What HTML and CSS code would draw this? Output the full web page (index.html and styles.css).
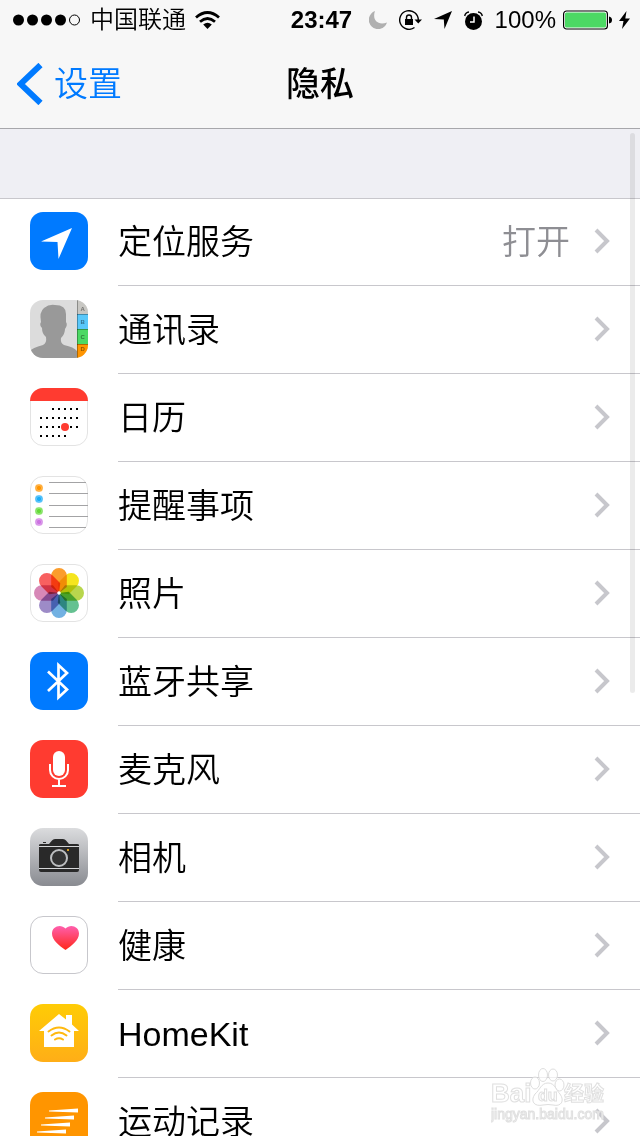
FILE: index.html
```html
<!DOCTYPE html>
<html lang="zh-CN">
<head>
<meta charset="utf-8">
<meta name="viewport" content="width=device-width, initial-scale=1">
<title>隐私</title>
<link rel="stylesheet" href="styles.css">
</head>
<body>
<div class="screen">
  <header class="header">
    <div class="status">
      <div class="status-left">
        <svg width="68" height="12" viewBox="0 0 68 12"><g><circle cx="5.500" cy="6" r="5.500"/><circle cx="19.500" cy="6" r="5.500"/><circle cx="33.500" cy="6" r="5.500"/><circle cx="47.500" cy="6" r="5.500"/><circle cx="61.500" cy="6" r="5" fill="none" stroke="#000"/></g></svg>
        <span class="carrier">中国联通</span>
        <svg width="25" height="18" viewBox="0 0 25 18"><path d="M1 6.500Q12.500-3.500 24 6.500M5 10.800Q12.500 4.300 20 10.800" fill="none" stroke="#000" stroke-width="2.800"/><path d="M8.200 13.600Q12.500 10 16.800 13.600L12.500 18Z"/></svg>
      </div>
      <time class="clock">23:47</time>
      <div class="status-right">
        <svg width="18" height="18" viewBox="0 0 18 18"><path d="M6 0C3 8 8 15 18 11.500A9.300 9.300 0 1 1 6 0Z" fill="#b0b0b0"/></svg>
        <svg width="23" height="20" viewBox="0 0 23 20"><path d="M15.500 17.500A9.300 9.300 0 1 1 19.300 10" fill="none" stroke="#000" stroke-width="1.400"/><path d="M15.500 9.500H23L19.300 13.500ZM6 9H14V15H6Z"/><path d="M7.500 9V7.500A2.500 2.500 0 0 1 12.500 7.500V9" fill="none" stroke="#000" stroke-width="1.400"/></svg>
        <svg width="18" height="18" viewBox="0 0 18 18"><path d="M18 0 10.500 18 9.800 8.500 0 8Z"/></svg>
        <svg width="19" height="19" viewBox="0 0 19 19"><circle cx="9.500" cy="10.500" r="8.500"/><path d="M.7 5A5 5 0 0 1 5 1M18.300 5A5 5 0 0 0 14 1" fill="none" stroke="#000" stroke-width="1.400"/><path d="M10 5.500V11H6" fill="none" stroke="#fff" stroke-width="1.500"/></svg>
        <div class="power">
          <span>100%</span>
          <svg width="49" height="20" viewBox="0 0 49 20"><rect x=".6" y="1" width="43.800" height="18" rx="3" fill="#fff" stroke="#000" stroke-width="1.200"/><rect x="2" y="2.500" width="41" height="15" rx="1.500" fill="#4cd964"/><path d="M46 6.500Q49 7 49 10T46 13.500Z"/></svg>
          <svg width="11" height="18" viewBox="0 0 11 18"><path d="M7.500 0 0 10H4.500L3 18 11 7.500H6.300Z"/></svg>
        </div>
      </div>
    </div>
    <nav class="nav">
      <a class="back" href="#"><svg width="26" height="42" viewBox="0 0 26 42"><path d="M23.500 2 3.500 21 23.500 40" fill="none" stroke="#007aff" stroke-width="6"/></svg><span>设置</span></a>
      <h1 class="title">隐私</h1>
    </nav>
  </header>

  <main class="list">
    <a class="row" href="#">
      <svg class="icon" viewBox="0 0 58 58"><rect width="58" height="58" rx="13" fill="#007aff"/><path d="M42 16 28.500 47 27.500 30 11 29.500Z" fill="#fff"/></svg>
      <span class="cell"><span class="label">定位服务</span><span class="value">打开</span><svg class="chevron" viewBox="0 0 16 26"><path d="M2 2 13 13 2 24"/></svg></span>
    </a>
    <a class="row" href="#">
      <svg class="icon" viewBox="0 0 58 58"><defs><clipPath id="round"><rect width="58" height="58" rx="13"/></clipPath></defs><g clip-path="url(#round)"><path fill="#dcdcdc" d="M0 0H58V58H0Z"/><path fill="#999" d="M0 58V51Q2 48 13 45Q17 43 16 37Q12 34 12 28Q9 25 11 22Q9 12 14 8Q19 4 25 5Q36 5 36 14V22Q38 25 35 29Q35 34 31 38Q30 43 34 45Q44 47 47 51V58Z"/><path fill="#c8c7c3" d="M47 0H58V14H47Z"/><path fill="#5ac8fa" d="M47 14H58V29H47Z"/><path fill="#4cd964" d="M47 29H58V44H47Z"/><path fill="#ff9500" d="M47 44H58V58H47Z"/><path d="M47.500 0V58M47 14.500H58M47 29.500H58M47 44.500H58" stroke="#000" stroke-opacity=".3" fill="none"/><g class="tabs"><text x="50.500" y="11">A</text><text x="50.500" y="24">B</text><text x="50.500" y="39">C</text><text x="50.500" y="51">D</text></g></g></svg>
      <span class="cell"><span class="label">通讯录</span><svg class="chevron" viewBox="0 0 16 26"><path d="M2 2 13 13 2 24"/></svg></span>
    </a>
    <a class="row" href="#">
      <svg class="icon" viewBox="0 0 58 58"><rect x=".5" y=".5" width="57" height="57" rx="12.500" fill="#fff" stroke="#e3e3e3"/><path clip-path="url(#round)" fill="#ff3b30" d="M0 0H58V13H0Z"/><path fill="none" stroke="#000" stroke-width="2" stroke-dasharray="2 4" d="M22 21H48M10 30H48M10 39H48M10 48H36"/><circle cx="35" cy="39" r="4" fill="#ff3b30"/></svg>
      <span class="cell"><span class="label">日历</span><svg class="chevron" viewBox="0 0 16 26"><path d="M2 2 13 13 2 24"/></svg></span>
    </a>
    <a class="row" href="#">
      <svg class="icon" viewBox="0 0 58 58"><rect x=".5" y=".5" width="57" height="57" rx="12.500" fill="#fff" stroke="#e3e3e3"/><path d="M19 6.500H56M19 17.500H58M19 29.500H58M19 40.500H58M19 51.500H56" stroke="#a3a3a5" fill="none"/><g stroke-opacity=".55" stroke-width="1.500"><circle cx="9" cy="12" r="3.300" fill="#ff9500" stroke="#ff9500"/><circle cx="9" cy="23" r="3.300" fill="#1badf8" stroke="#1badf8"/><circle cx="9" cy="35" r="3.300" fill="#63da38" stroke="#63da38"/><circle cx="9" cy="46" r="3.300" fill="#cc73e1" stroke="#cc73e1"/></g><g fill="none" stroke="#fff" stroke-opacity=".5" stroke-width=".6"><circle cx="9" cy="12" r="2.700"/><circle cx="9" cy="23" r="2.700"/><circle cx="9" cy="35" r="2.700"/><circle cx="9" cy="46" r="2.700"/></g></svg>
      <span class="cell"><span class="label">提醒事项</span><svg class="chevron" viewBox="0 0 16 26"><path d="M2 2 13 13 2 24"/></svg></span>
    </a>
    <a class="row" href="#">
      <svg class="icon" viewBox="0 0 58 58"><defs><path id="petal" d="M21.200 11.800A7.800 7.800 0 0 1 36.800 11.800V23L29 29 21.200 23Z"/></defs><rect x=".5" y=".5" width="57" height="57" rx="12.500" fill="#fff" stroke="#e3e3e3"/><g class="petals"><use href="#petal" fill="#fb9d2c"/><use href="#petal" fill="#f5e51e" transform="rotate(45 29 29)"/><use href="#petal" fill="#b8d64d" transform="rotate(90 29 29)"/><use href="#petal" fill="#65c191" transform="rotate(135 29 29)"/><use href="#petal" fill="#72b1e2" transform="rotate(180 29 29)"/><use href="#petal" fill="#9d8bc7" transform="rotate(225 29 29)"/><use href="#petal" fill="#d788b7" transform="rotate(270 29 29)"/><use href="#petal" fill="#f86060" transform="rotate(315 29 29)"/></g><circle cx="29" cy="29" r="1.800" fill="#fff"/></svg>
      <span class="cell"><span class="label">照片</span><svg class="chevron" viewBox="0 0 16 26"><path d="M2 2 13 13 2 24"/></svg></span>
    </a>
    <a class="row" href="#">
      <svg class="icon" viewBox="0 0 58 58"><rect width="58" height="58" rx="13" fill="#007aff"/><path d="M18 19.500 37 37.500 28.500 45.500V13L37 21 18 39" fill="none" stroke="#fff" stroke-width="2.700"/></svg>
      <span class="cell"><span class="label">蓝牙共享</span><svg class="chevron" viewBox="0 0 16 26"><path d="M2 2 13 13 2 24"/></svg></span>
    </a>
    <a class="row" href="#">
      <svg class="icon" viewBox="0 0 58 58"><rect width="58" height="58" rx="13" fill="#ff3b30"/><rect x="23" y="11" width="12" height="25" rx="6" fill="#fff"/><path d="M20 24V30A9 9 0 0 0 38 30V24M29 39V46M22 46H36" fill="none" stroke="#fff" stroke-width="2"/></svg>
      <span class="cell"><span class="label">麦克风</span><svg class="chevron" viewBox="0 0 16 26"><path d="M2 2 13 13 2 24"/></svg></span>
    </a>
    <a class="row" href="#">
      <svg class="icon" viewBox="0 0 58 58"><defs><linearGradient id="steel" x2="0" y2="1"><stop stop-color="#dbdcde"/><stop offset="1" stop-color="#898b91"/></linearGradient></defs><rect width="58" height="58" rx="13" fill="url(#steel)"/><path d="M9 17Q9 16 11 16H19L22 12.500Q23 11 25 11H33Q35 11 36 12.500L39 16H47Q49 16 49 17V42Q49 44 47 44H11Q9 44 9 42ZM13 14H16V15H13Z" fill="#292929"/><path d="M9 18.500H49M9 40.500H49" stroke="#d5d6d8"/><circle cx="29" cy="30" r="8" fill="#333" stroke="#bdbfc1" stroke-width="2"/><path d="M37 21H39V23H37Z" fill="#d69c22"/></svg>
      <span class="cell"><span class="label">相机</span><svg class="chevron" viewBox="0 0 16 26"><path d="M2 2 13 13 2 24"/></svg></span>
    </a>
    <a class="row" href="#">
      <svg class="icon" viewBox="0 0 58 58"><defs><linearGradient id="heart" x2="0" y2="1"><stop stop-color="#ff5fae"/><stop offset="1" stop-color="#ff2719"/></linearGradient></defs><rect x=".5" y=".5" width="57" height="57" rx="12.500" fill="#fff" stroke="#c7c7cc"/><path d="M35.500 34C29 29.500 22 24 22 17.500C22 10 31 7.500 35.500 12.500C40 7.500 49 10 49 17.500C49 24 42 29.500 35.500 34Z" fill="url(#heart)"/></svg>
      <span class="cell"><span class="label">健康</span><svg class="chevron" viewBox="0 0 16 26"><path d="M2 2 13 13 2 24"/></svg></span>
    </a>
    <a class="row" href="#">
      <svg class="icon" viewBox="0 0 58 58"><defs><linearGradient id="amber" x2="0" y2="1"><stop stop-color="#ffcc05"/><stop offset="1" stop-color="#ffae17"/></linearGradient></defs><rect width="58" height="58" rx="13" fill="url(#amber)"/><path d="M29 10 36 15.500V11H42V20.500L49 27H44V43H14V27H9Z" fill="#fff"/><path d="M18.500 27.500Q29 19.500 39.500 27.500M21.500 31.500Q29 25.500 36.500 31.500M25 35.500Q29 33 33 35.500" fill="none" stroke="#ffb90f" stroke-width="2" stroke-linecap="round"/></svg>
      <span class="cell"><span class="label">HomeKit</span><svg class="chevron" viewBox="0 0 16 26"><path d="M2 2 13 13 2 24"/></svg></span>
    </a>
    <a class="row" href="#">
      <svg class="icon" viewBox="0 0 58 58"><rect width="58" height="58" rx="13" fill="#ff9500"/><path d="M19 18.500 48 16.500V20.500L19 19.500ZM15 25.500 44 23.500V27.500L15 26.500ZM11 32.500 40 30.500V34.500L11 33.500ZM7 39.500 36 37.500V41.500L7 40.500Z" fill="#fff"/></svg>
      <span class="cell"><span class="label">运动记录</span><svg class="chevron" viewBox="0 0 16 26"><path d="M2 2 13 13 2 24"/></svg></span>
    </a>
  </main>

  <div class="scrollbar"></div>
  <svg class="watermark" width="120" height="60" viewBox="0 0 120 60">
    <g fill="#fff" fill-opacity=".7" stroke="#dedede"><ellipse cx="44" cy="16" rx="4.500" ry="6"/><ellipse cx="52" cy="8" rx="4.500" ry="6.500"/><ellipse cx="62" cy="8" rx="4.500" ry="6"/><ellipse cx="68.500" cy="18" rx="4.500" ry="6"/><path d="M57 16C64 16 65 23 69 27C74 34 70 40 62 38Q57 37 52 38C43 40 39 34 44 27C49 23 50 16 57 16Z"/></g>
    <g class="mark"><text class="mark-big" x="0" y="35">Bai</text><text class="mark-du" x="47" y="34">du</text><text class="mark-cjk" x="73" y="34">经验</text><text class="mark-url" x="0" y="52">jingyan.baidu.com</text></g>
  </svg>
</div>
</body>
</html>
```
FILE: styles.css
```css
* { box-sizing: border-box; }

body {
  margin: 0;
  background: #fff;
  color: #000;
  font-family: "Liberation Sans", "Noto Sans CJK SC", sans-serif;
  font-weight: 350;
}

svg { display: block; flex: none; }
a { color: inherit; text-decoration: none; }

.screen {
  position: relative;
  height: 100vh;
  overflow: hidden;
  background: #efeff4;
}

.header {
  background: #f7f7f7;
  border-bottom: 1px solid #a7a7ab;
}

.status {
  display: grid;
  grid-template-columns: 1fr auto 1fr;
  align-items: center;
  height: 40px;
  padding: 0 10px 0 13px;
  font-size: 24px;
  line-height: 40px;
}

.status-left, .status-right, .power { display: flex; align-items: center; }
.status-left { gap: 9px; }
.status-right { gap: 12px; justify-content: flex-end; }
.power { gap: 7px; }
.clock { font-weight: 700; }

.nav {
  display: grid;
  grid-template-columns: 1fr auto 1fr;
  align-items: center;
  height: 88px;
  padding: 0 17px;
  font-size: 34px;
  line-height: 50px;
}

.back {
  display: flex;
  align-items: center;
  gap: 11px;
  color: #007aff;
}

.title {
  margin: 0;
  font-size: 34px;
  font-weight: 500;
}

.list {
  margin-top: 69px;
  background: #fff;
  box-shadow: inset 0 1px #c8c7cc;
}

.row {
  display: flex;
  align-items: center;
  gap: 30px;
  height: 88px;
  padding-left: 30px;
}

.icon { width: 58px; height: 58px; margin-bottom: 2px; }

.cell {
  display: flex;
  flex: 1;
  align-items: center;
  gap: 24px;
  height: 100%;
  padding-right: 30px;
  border-bottom: 1px solid #c8c7cc;
  font-size: 34px;
  line-height: 48px;
}

.label { flex: 1; }
.value { color: #8e8e93; }

.chevron {
  width: 16px;
  height: 26px;
  margin-bottom: 2px;
  fill: none;
  stroke: #c7c7cc;
  stroke-width: 4px;
}

.tabs { font-size: 6px; font-weight: 700; fill: #000; fill-opacity: .45; }
.petals { isolation: isolate; }
.petals use { mix-blend-mode: multiply; }

.scrollbar {
  position: absolute;
  top: 133px;
  right: 5px;
  width: 5px;
  height: 560px;
  border-radius: 3px;
  background: rgba(0, 0, 0, .08);
}

.watermark {
  position: absolute;
  right: 29px;
  bottom: 9px;
}

.mark { fill: #fff; stroke: #e0e0e0; stroke-width: 1px; font-weight: 700; }
.mark-big { font-size: 26px; }
.mark-du { font-size: 16px; }
.mark-cjk { font-size: 20px; }
.mark-url { font-size: 14px; font-weight: 400; }
```
